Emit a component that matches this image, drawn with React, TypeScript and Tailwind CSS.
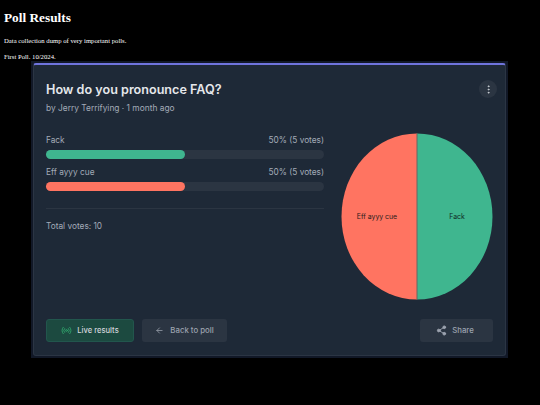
import React from 'react'
import { ArrowLeft, EllipsisVertical, Radio, Share2 } from 'lucide-react'

const options = [
  { label: 'Fack', bar: 'bg-[#3fb68f]' },
  { label: 'Eff ayyy cue', bar: 'bg-[#ff7461]' },
]

const PollPie: React.FC = () => (
  <svg width="152" height="167" viewBox="0 0 152 167" className="shrink-0">
    <path d="M76 0.5 A75.5 83 0 0 1 76 166.5 Z" fill="#3fb68f" />
    <path d="M76 0.5 A75.5 83 0 0 0 76 166.5 Z" fill="#ff7461" />
    <line x1="76" y1="0.5" x2="76" y2="166.5" stroke="#6b6460" strokeWidth="1" />
    <text x="36" y="86" textAnchor="middle" fontSize="6.9" fill="#2a1c1c" fontFamily="Inter, sans-serif">Eff ayyy cue</text>
    <text x="116" y="86" textAnchor="middle" fontSize="6.9" fill="#0f2a25" fontFamily="Inter, sans-serif">Fack</text>
  </svg>
)

const App: React.FC = () => {
  return (
    <div className="w-[540px] h-[405px] overflow-hidden bg-black text-white font-['Liberation_Serif',serif]">
      <div className="pl-[4px] pt-[10px]">
        <h1 className="text-[13.3px] leading-[16px] font-bold">Poll Results</h1>
        <p className="mt-[11px] text-[6.7px] leading-[8px]">Data collection dump of very important polls.</p>
        <p className="mt-[8px] text-[6.7px] leading-[8px]">First Poll. 10/2024.</p>
      </div>

      <div className="ml-[31px] w-[477px] h-[297px] bg-[#111827] p-[2px] font-['Inter',sans-serif]">
        <div className="h-full flex flex-col rounded-[3px] border border-[#2b3544] border-t-2 border-t-[#6f74dd] bg-[#1e2937] px-[12px] pt-[15px] pb-[13px]">
          <div className="flex justify-between items-start">
            <div>
              <div className="text-[12.6px] leading-[20px] font-semibold text-[#e5e7eb]">How do you pronounce FAQ?</div>
              <div className="mt-[2px] text-[8.4px] leading-[12px] text-[#a3abb8]">by Jerry Terrifying · 1 month ago</div>
            </div>
            <div className="-mr-[4px] w-[18px] h-[18px] rounded-full bg-[#2b3542] flex items-center justify-center">
              <EllipsisVertical size={11} className="text-[#d1d5db]" />
            </div>
          </div>

          <div className="flex flex-1 mt-[6px]">
            <div className="w-[278px] pt-[14px]">
              <div className="flex flex-col gap-[7px]">
                {options.map(o => (
                  <div key={o.label}>
                    <div className="flex justify-between text-[8.3px] leading-[13px] text-[#a3abb8]">
                      <span>{o.label}</span>
                      <span>50% (5 votes)</span>
                    </div>
                    <div className="mt-[3px] h-[9px] rounded-full bg-[#2b3542]">
                      <div className={`h-full w-1/2 rounded-full ${o.bar}`} />
                    </div>
                  </div>
                ))}
              </div>
              <div className="mt-[17px] border-t border-[#2b3542] pt-[11px] text-[8.3px] leading-[13px] text-[#a3abb8]">Total votes: 10</div>
            </div>
            <div className="ml-[17px] pt-[13px]">
              <PollPie />
            </div>
          </div>

          <div className="flex items-center gap-[8px]">
            <button className="h-[23px] w-[88px] rounded-[3px] border border-[#22564d] bg-[#1c4a40] flex items-center justify-center gap-[5px] text-[7.6px] font-medium text-[#d1d5db]">
              <Radio size={11} className="text-[#2fa36b]" />
              Live results
            </button>
            <button className="h-[23px] w-[85px] rounded-[3px] bg-[#2b3542] flex items-center justify-center gap-[6px] text-[7.8px] font-medium text-[#9ca3af]">
              <ArrowLeft size={9} />
              Back to poll
            </button>
            <button className="ml-auto h-[23px] w-[73px] rounded-[3px] bg-[#2b3542] flex items-center justify-center gap-[5px] pr-[3px] text-[7.8px] font-medium text-[#9ca3af]">
              <Share2 size={11} className="fill-current" />
              Share
            </button>
          </div>
        </div>
      </div>
    </div>
  )
}

export default App
